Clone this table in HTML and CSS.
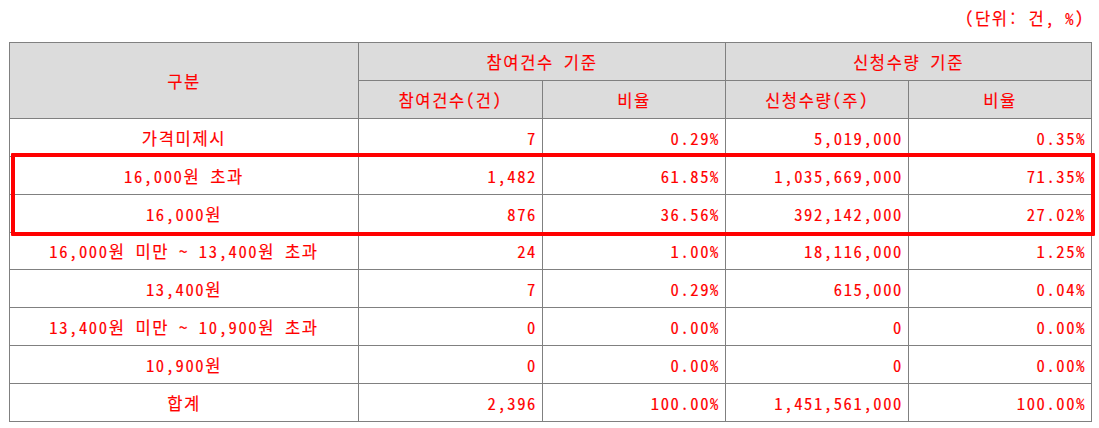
FILE: index.html
```html
<!DOCTYPE html>
<html lang="ko">
<head>
<meta charset="utf-8">
<title>청약 결과</title>
<link rel="stylesheet" href="styles.css">
</head>
<body>
<div class="page">
  <div class="unit">(단위: 건, %)</div>
  <div class="table-wrap">
    <table class="grid">
      <colgroup>
        <col class="c1"><col class="c2"><col class="c3"><col class="c4"><col class="c5">
      </colgroup>
      <thead>
        <tr>
          <th rowspan="2">구분</th>
          <th colspan="2">참여건수 기준</th>
          <th colspan="2">신청수량 기준</th>
        </tr>
        <tr>
          <th>참여건수(건)</th>
          <th>비율</th>
          <th>신청수량(주)</th>
          <th>비율</th>
        </tr>
      </thead>
      <tbody>
        <tr><td class="label">가격미제시</td><td>7</td><td>0.29%</td><td>5,019,000</td><td>0.35%</td></tr>
        <tr><td class="label">16,000원 초과</td><td>1,482</td><td>61.85%</td><td>1,035,669,000</td><td>71.35%</td></tr>
        <tr><td class="label">16,000원</td><td>876</td><td>36.56%</td><td>392,142,000</td><td>27.02%</td></tr>
        <tr class="short"><td class="label">16,000원 미만 ~ 13,400원 초과</td><td>24</td><td>1.00%</td><td>18,116,000</td><td>1.25%</td></tr>
        <tr><td class="label">13,400원</td><td>7</td><td>0.29%</td><td>615,000</td><td>0.04%</td></tr>
        <tr><td class="label">13,400원 미만 ~ 10,900원 초과</td><td>0</td><td>0.00%</td><td>0</td><td>0.00%</td></tr>
        <tr><td class="label">10,900원</td><td>0</td><td>0.00%</td><td>0</td><td>0.00%</td></tr>
        <tr><td class="label">합계</td><td>2,396</td><td>100.00%</td><td>1,451,561,000</td><td>100.00%</td></tr>
      </tbody>
    </table>
    <div class="highlight"></div>
  </div>
</div>
</body>
</html>
```
FILE: styles.css
```css
html, body {
  margin: 0;
  padding: 0;
  background: #ffffff;
}

.page {
  width: 1082px;
  padding-left: 9px;
  font-family: "Noto Sans Mono CJK KR", "Noto Sans CJK KR", "DejaVu Sans Mono", monospace;
  font-size: 16.6px;
  letter-spacing: 1.6px;
  color: #ff0000;
  -webkit-text-stroke: 0.15px #ff0000;
}

.unit {
  height: 42px;
  line-height: 36px;
  text-align: right;
  padding-right: 6px;
  box-sizing: border-box;
}

.table-wrap {
  position: relative;
}

.grid {
  border-collapse: collapse;
  table-layout: fixed;
  width: 1082px;
  border: 1px solid #000000;
}

.grid col.c1 { width: 349px; }
.grid col.c2 { width: 184px; }
.grid col.c3 { width: 183px; }
.grid col.c4 { width: 183px; }
.grid col.c5 { width: 183px; }

.grid tr {
  height: 38px;
}

.grid tr.short {
  height: 37px;
}

.grid th,
.grid td {
  border: 1px solid #808080;
  padding: 0 5px 0 0;
  font-weight: normal;
  white-space: nowrap;
  vertical-align: middle;
}

.grid th {
  background: #dcdcdc;
  text-align: center;
  padding: 0;
}

.grid td {
  text-align: right;
}

.grid td.label {
  text-align: center;
  padding: 0;
}

.highlight {
  position: absolute;
  left: 2px;
  top: 111px;
  width: 1084px;
  height: 83px;
  box-sizing: border-box;
  border: 4px solid #ff0000;
  border-radius: 1px;
  pointer-events: none;
}
```
